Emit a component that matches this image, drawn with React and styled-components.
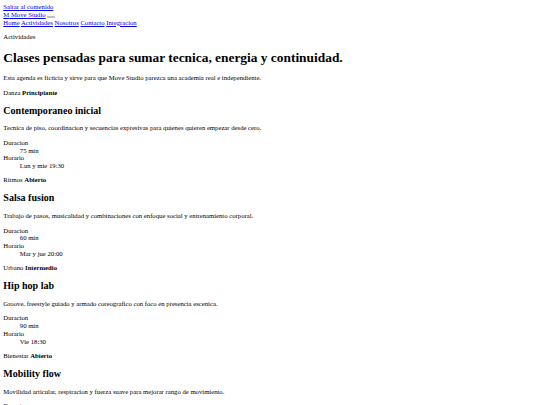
import { createGlobalStyle, styled } from "styled-components"

const GlobalStyle = createGlobalStyle`
  html, body {
    background: #ffffff;
  }
  body {
    margin: 3.3px;
    font-family: "Liberation Serif", "Times New Roman", serif;
    font-size: 6.7px;
    line-height: 1.15;
    color: #000000;
  }
`

const classes = [
    {
        area: "Danza",
        level: "Principiante",
        name: "Contemporaneo inicial",
        text: "Tecnica de piso, coordinacion y secuencias expresivas para quienes quieren empezar desde cero.",
        duration: "75 min",
        schedule: "Lun y mie 19:30",
    },
    {
        area: "Ritmos",
        level: "Abierto",
        name: "Salsa fusion",
        text: "Trabajo de pasos, musicalidad y combinaciones con enfoque social y entrenamiento corporal.",
        duration: "60 min",
        schedule: "Mar y jue 20:00",
    },
    {
        area: "Urbano",
        level: "Intermedio",
        name: "Hip hop lab",
        text: "Groove, freestyle guiado y armado coreografico con foco en presencia escenica.",
        duration: "90 min",
        schedule: "Vie 18:30",
    },
    {
        area: "Bienestar",
        level: "Abierto",
        name: "Mobility flow",
        text: "Movilidad articular, respiracion y fuerza suave para mejorar rango de movimiento.",
        duration: "50 min",
        schedule: "Sab 10:00",
    },
]

const App = () => {
    return (
        <>
            <GlobalStyle />
            <SkipLink href="#contenido">Saltar al contenido</SkipLink>
            <Header>
                <Brand href="#">
                    <span>M</span> Move Studio
                </Brand>
                <MenuButton type="button" aria-label="Abrir menu" />
                <Nav>
                    <NavLink href="#">Home</NavLink> <NavLink href="#">Actividades</NavLink>{" "}
                    <NavLink href="#">Nosotros</NavLink> <NavLink href="#">Contacto</NavLink>{" "}
                    <NavLink href="#">Integracion</NavLink>
                </Nav>
            </Header>

            <Main id="contenido">
                <Eyebrow>Actividades</Eyebrow>
                <Title>Clases pensadas para sumar tecnica, energia y continuidad.</Title>
                <Lead>Esta agenda es ficticia y sirve para que Move Studio parezca una academia real e independiente.</Lead>

                {classes.map((c) => (
                    <ClassCard key={c.name}>
                        <Meta>
                            {c.area} <strong>{c.level}</strong>
                        </Meta>
                        <CardTitle>{c.name}</CardTitle>
                        <Desc>{c.text}</Desc>
                        <Details>
                            <dt>Duracion</dt>
                            <dd>{c.duration}</dd>
                            <dt>Horario</dt>
                            <dd>{c.schedule}</dd>
                        </Details>
                    </ClassCard>
                ))}
            </Main>
        </>
    )
}

export default App

const SkipLink = styled.a`
    display: block;
    color: #0000ee;
    text-decoration: underline;
`

const Header = styled.header`
    display: block;
`

const Brand = styled.a`
    color: #0000ee;
    text-decoration: underline;
`

const MenuButton = styled.button`
    display: inline-block;
    vertical-align: baseline;
    width: 8px;
    height: 2px;
    margin: 0 0 0 1.5px;
    padding: 0;
    background: #e4e4e4;
    border: 0.5px solid #c2c2c2;
    border-radius: 0;
`

const Nav = styled.nav`
    display: block;
`

const NavLink = styled.a`
    color: #0000ee;
    text-decoration: underline;
`

const Main = styled.main`
    display: block;
`

const Eyebrow = styled.p`
    margin: 1em 0;
`

const Title = styled.h1`
    font-size: 2em;
    font-weight: bold;
    margin: 0.67em 0;
`

const Lead = styled.p`
    margin: 1em 0;
`

const ClassCard = styled.article`
    display: block;
`

const Meta = styled.p`
    margin: 1em 0;

    strong {
        font-weight: bold;
    }
`

const CardTitle = styled.h2`
    font-size: 1.5em;
    font-weight: bold;
    margin: 0.83em 0;
`

const Desc = styled.p`
    margin: 1em 0;
`

const Details = styled.dl`
    margin: 1em 0;

    dt {
        display: block;
    }

    dd {
        display: block;
        margin-left: 16.5px;
    }
`
